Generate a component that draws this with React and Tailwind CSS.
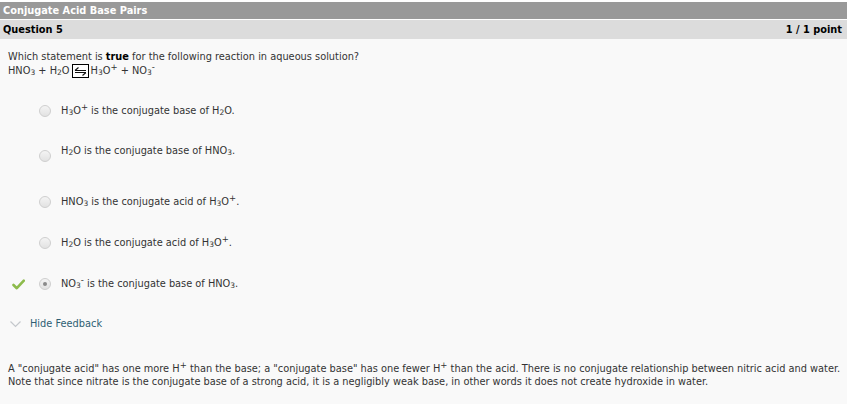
import React from "react";

const Sub = ({ children }) => (
  <sub className="text-[7.5px] relative top-[1px] align-baseline leading-none">{children}</sub>
);
const Sup = ({ children }) => (
  <sup className="text-[8.5px] relative -top-[4px] align-baseline leading-none">{children}</sup>
);

function Radio({ checked, offset = "" }) {
  return (
    <span className={`relative inline-block w-[12px] h-[12px] rounded-full border border-[#cfcfcf] bg-gradient-to-b from-[#f4f4f4] to-[#e2e2e2] ${offset}`}>
      {checked && (
        <span className="absolute left-[3px] top-[3px] w-[4px] h-[4px] rounded-full bg-[#8a8a8a]" />
      )}
    </span>
  );
}

function Option({ children, checked, correct, className = "", radioOffset = "" }) {
  return (
    <div className={`flex items-center h-[14px] ${className}`}>
      <div className="w-[39px] flex justify-end">
        {correct && (
          <svg width="13" height="11" viewBox="0 0 13 11" className="mr-[14px]">
            <path d="M1.5 6 L4.8 9.2 L11.8 1.6" stroke="#8dbb4c" strokeWidth="2.6" fill="none" strokeLinecap="round" strokeLinejoin="round" />
          </svg>
        )}
      </div>
      <Radio checked={checked} offset={radioOffset} />
      <div className="ml-[10px]">{children}</div>
    </div>
  );
}

export default function App() {
  return (
    <div
      className="w-[847px] h-[404px] overflow-hidden bg-[#f9f9f9] text-[#333333] text-[9.8px] leading-[14px]"
      style={{ fontFamily: '"DejaVu Sans", Verdana, sans-serif' }}
    >
      <div className="h-[2px] bg-white" />
      <div className="h-[17px] bg-[#999999] text-white font-bold text-[9.8px] flex items-center px-[3px]">
        Conjugate Acid Base Pairs
      </div>
      <div className="h-px bg-white" />
      <div className="h-[19px] bg-[#dcdcdc] text-black font-bold text-[9.8px] flex items-center justify-between pl-[3px] pr-[5px] whitespace-pre">
        <span>Question 5</span>
        <span>1 / 1 point</span>
      </div>

      <div className="px-[8px] pt-[11px]">
        <div>
          Which statement is <b className="text-black">true</b> for the following reaction in aqueous solution?
        </div>
        <div className="flex items-center">
          <span>
            HNO<Sub>3</Sub> + H<Sub>2</Sub>O
          </span>
          <span className="mx-[2px] inline-flex items-center justify-center w-[17px] h-[14px] border border-black bg-white">
            <svg width="13" height="9" viewBox="0 0 13 9">
              <path d="M1 3.5 H12 M1 3.5 L4.5 0.5" stroke="#111" strokeWidth="1.1" fill="none" />
              <path d="M1 5.5 H12 M12 5.5 L8.5 8.5" stroke="#111" strokeWidth="1.1" fill="none" />
            </svg>
          </span>
          <span>
            H<Sub>3</Sub>O<Sup>+</Sup> + NO<Sub>3</Sub><Sup>-</Sup>
          </span>
        </div>
      </div>

      <div className="mt-[26px]">
        <Option>
          H<Sub>3</Sub>O<Sup>+</Sup> is the conjugate base of H<Sub>2</Sub>O.
        </Option>
        <Option className="mt-[26px]" radioOffset="top-[5px]">
          H<Sub>2</Sub>O is the conjugate base of HNO<Sub>3</Sub>.
        </Option>
        <Option className="mt-[37px]">
          HNO<Sub>3</Sub> is the conjugate acid of H<Sub>3</Sub>O<Sup>+</Sup>.
        </Option>
        <Option className="mt-[27px]">
          H<Sub>2</Sub>O is the conjugate acid of H<Sub>3</Sub>O<Sup>+</Sup>.
        </Option>
        <Option className="mt-[27px]" checked correct>
          NO<Sub>3</Sub><Sup>-</Sup> is the conjugate base of HNO<Sub>3</Sub>.
        </Option>
      </div>

      <div className="mt-[26px] flex items-center pl-[10px] h-[14px]">
        <svg width="11" height="7" viewBox="0 0 11 7" className="mr-[9px]">
          <path d="M0.5 0.5 L5.5 5.5 L10.5 0.5" stroke="#c4c8cc" strokeWidth="1.2" fill="none" />
        </svg>
        <span className="text-[#2e5e73]">Hide Feedback</span>
      </div>

      <div className="mt-[31px] pl-[8px] leading-[13px] text-[9.8px] whitespace-nowrap">
        <div>
          A "conjugate acid" has one more H<Sup>+</Sup> than the base; a "conjugate base" has one fewer H<Sup>+</Sup> than the acid. There is no conjugate relationship between nitric acid and water.
        </div>
        <div>
          Note that since nitrate is the conjugate base of a strong acid, it is a negligibly weak base, in other words it does not create hydroxide in water.
        </div>
      </div>
    </div>
  );
}
